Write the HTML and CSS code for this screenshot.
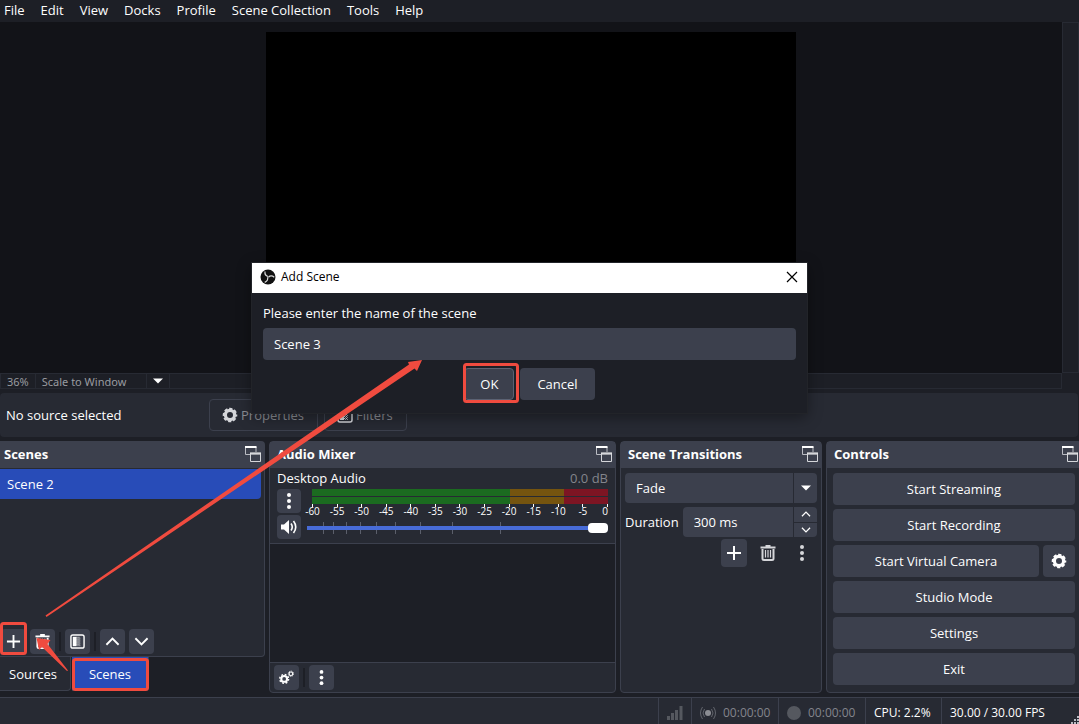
FILE: index.html
```
<!DOCTYPE html>
<html lang="en">
<head>
    <meta charset="UTF-8">
    <meta name="viewport" content="width=device-width, initial-scale=1.0">
    <title>OBS - Add Scene</title>
    <link rel="stylesheet" href="styles.css">
</head>
<body>
    <!-- Shared icons -->
    <svg class="sprite" aria-hidden="true">
        <symbol id="popout" viewBox="0 0 16 16">
            <path d="M5 8.5H.5V1H11v5" fill="none" stroke="#b9bbc2"/>
            <path d="M0 0h11.5v2H0zM5 6.5h11v2H5z" fill="#fff"/>
            <path d="M5.5 7.5h10v8h-10z" fill="none" stroke="#d5d6da"/>
        </symbol>
        <symbol id="gear" viewBox="0 0 16 16">
            <circle cx="8" cy="8" r="4.6" fill="none" stroke="currentColor" stroke-width="3.2"/>
            <circle cx="8" cy="8" r="6.4" fill="none" stroke="currentColor" stroke-width="1.8" stroke-dasharray="3.2 1.83" stroke-dashoffset="1.6"/>
        </symbol>
        <symbol id="plus" viewBox="0 0 16 16">
            <path d="M8 1v14M1 8h14" stroke="currentColor" stroke-width="2"/>
        </symbol>
        <symbol id="trash" viewBox="0 0 16 16">
            <path d="M.5 2.5h15M5.5 1h5" stroke="currentColor" stroke-width="2"/>
            <path d="M2.5 4v9.5q0 1.5 1.5 1.5h8q1.5 0 1.5-1.5V4" fill="none" stroke="currentColor" stroke-width="2"/>
            <path d="M5.5 5v7.5M8 5v7.5M10.5 5v7.5" stroke="currentColor" stroke-width="1.2"/>
        </symbol>
        <symbol id="filter" viewBox="0 0 16 16">
            <rect x="1" y="1" width="14" height="14" rx="2" fill="none" stroke="currentColor" stroke-width="1.5"/>
            <path d="M3 3h4v10H3z" fill="currentColor"/>
            <path d="M7.5 3v10M9.5 3v10" stroke="currentColor" stroke-dasharray="1 1"/>
            <path d="M8.5 4v9M10.5 4v9" stroke="currentColor" stroke-dasharray="1 1" opacity=".7"/>
        </symbol>
        <symbol id="up" viewBox="0 0 16 16">
            <path d="M1.5 11.5L8 5l6.5 6.5" fill="none" stroke="currentColor" stroke-width="2"/>
        </symbol>
        <symbol id="down" viewBox="0 0 16 16">
            <path d="M1.5 4.5L8 11l6.5-6.5" fill="none" stroke="currentColor" stroke-width="2"/>
        </symbol>
        <symbol id="dots" viewBox="0 0 16 16">
            <circle cx="8" cy="2" r="2" fill="currentColor"/>
            <circle cx="8" cy="8" r="2" fill="currentColor"/>
            <circle cx="8" cy="14" r="2" fill="currentColor"/>
        </symbol>
        <symbol id="speaker" viewBox="0 0 16 16">
            <path d="M0 5.5h3L8 1v14l-5-4.500H0z" fill="currentColor"/>
            <path d="M10 4.5q2.500 3.500 0 7M12.500 2q4.500 6 0 12" fill="none" stroke="currentColor" stroke-width="1.600"/>
        </symbol>
        <symbol id="gears" viewBox="0 0 16 16">
            <circle cx="5.5" cy="9.5" r="3.1" fill="none" stroke="currentColor" stroke-width="2.2"/>
            <circle cx="5.5" cy="9.5" r="4.7" fill="none" stroke="currentColor" stroke-width="1.6" stroke-dasharray="1.900 1.790"/>
            <circle cx="12.7" cy="4" r="1.9" fill="none" stroke="currentColor" stroke-width="1.2"/>
            <circle cx="12.7" cy="4" r="2.8" fill="none" stroke="currentColor" stroke-dasharray="1.200 1"/>
        </symbol>
        <symbol id="caret" viewBox="0 0 10 6">
            <path d="M0 .5h10L5 5.5z" fill="#fff"/>
        </symbol>
    </svg>

    <nav class="menu">
        <a href="#">File</a>
        <a href="#">Edit</a>
        <a href="#">View</a>
        <a href="#">Docks</a>
        <a href="#">Profile</a>
        <a href="#">Scene Collection</a>
        <a href="#">Tools</a>
        <a href="#">Help</a>
    </nav>

    <main class="preview">
        <div class="stage"><div class="canvas"></div></div>
        <div class="scroll-right"></div>
    </main>
    <div class="zoom-bar">
        <span class="zoom-level">36%</span>
        <span class="zoom-mode">Scale to Window</span>
        <button class="zoom-arrow" aria-label="Scale mode"><svg width="10" height="6"><use href="#caret"/></svg></button>
    </div>

    <div class="source-bar">
        <span class="source-name">No source selected</span>
        <button class="outline-button"><svg class="icon"><use href="#gear"/></svg>Properties</button>
        <button class="outline-button"><svg class="icon"><use href="#filter"/></svg>Filters</button>
    </div>

    <div class="docks">
        <div class="dock-column">
            <section class="dock scenes">
                <h2>Scenes <svg class="icon"><use href="#popout"/></svg></h2>
                <ul class="scene-list">
                    <li>Scene 2</li>
                </ul>
                <div class="toolbar">
                    <button class="tool" aria-label="Add scene"><svg class="icon"><use href="#plus"/></svg></button>
                    <button class="tool" aria-label="Remove scene"><svg class="icon"><use href="#trash"/></svg></button>
                    <i class="divider"></i>
                    <button class="tool" aria-label="Scene filters"><svg class="icon"><use href="#filter"/></svg></button>
                    <i class="divider"></i>
                    <button class="tool" aria-label="Move up"><svg class="icon"><use href="#up"/></svg></button>
                    <button class="tool" aria-label="Move down"><svg class="icon"><use href="#down"/></svg></button>
                </div>
            </section>
            <div class="tabs">
                <button class="tab">Sources</button>
                <button class="tab active">Scenes</button>
            </div>
        </div>

        <section class="dock mixer">
            <h2>Audio Mixer <svg class="icon"><use href="#popout"/></svg></h2>
            <div class="channel">
                <div class="channel-name">
                    <label for="volume">Desktop Audio</label>
                    <span>0.0 dB</span>
                </div>
                <div class="channel-body">
                    <div class="channel-buttons">
                        <button class="tool" aria-label="Audio options"><svg class="icon"><use href="#dots"/></svg></button>
                        <button class="tool" aria-label="Mute"><svg class="icon"><use href="#speaker"/></svg></button>
                    </div>
                    <div class="channel-levels">
                        <div class="meter"></div>
                        <div class="meter"></div>
                        <div class="scale">
                            <span>-60</span><span>-55</span><span>-50</span><span>-45</span><span>-40</span><span>-35</span><span>-30</span><span>-25</span><span>-20</span><span>-15</span><span>-10</span><span>-5</span><span>0</span>
                        </div>
                        <div class="slider">
                            <svg viewBox="0 0 301 12" preserveAspectRatio="none">
                                <path d="M16.5 0v12M26.5 0v12M39.5 0v12M53.5 0v12M69.5 0v12M88.5 0v12M113.5 0v12M145.5 0v12M193.5 0v12" stroke="#5b5f6b"/>
                            </svg>
                            <input type="range" id="volume" min="0" max="100" value="100">
                        </div>
                    </div>
                </div>
            </div>
            <div class="mixer-space"></div>
            <div class="toolbar mixer-toolbar">
                <button class="tool" aria-label="Advanced audio"><svg class="icon"><use href="#gears"/></svg></button>
                <i class="divider"></i>
                <button class="tool" aria-label="Mixer menu"><svg class="icon"><use href="#dots"/></svg></button>
            </div>
        </section>

        <section class="dock transitions">
            <h2>Scene Transitions <svg class="icon"><use href="#popout"/></svg></h2>
            <div class="transition-form">
                <div class="field">
                    <select aria-label="Transition">
                        <option>Fade</option>
                    </select>
                    <span class="field-arrow"><svg width="10" height="6"><use href="#caret"/></svg></span>
                </div>
                <div class="duration">
                    <label for="duration">Duration</label>
                    <div class="field">
                        <input type="text" id="duration" value="300 ms">
                        <div class="steps">
                            <button aria-label="Increase"><svg width="10" height="10"><use href="#up"/></svg></button>
                            <button aria-label="Decrease"><svg width="10" height="10"><use href="#down"/></svg></button>
                        </div>
                    </div>
                </div>
                <div class="transition-tools">
                    <button class="tool" aria-label="Add transition"><svg class="icon"><use href="#plus"/></svg></button>
                    <button class="tool flat" aria-label="Remove transition"><svg class="icon"><use href="#trash"/></svg></button>
                    <button class="tool flat" aria-label="Transition menu"><svg class="icon"><use href="#dots"/></svg></button>
                </div>
            </div>
        </section>

        <section class="dock controls">
            <h2>Controls <svg class="icon"><use href="#popout"/></svg></h2>
            <div class="control-list">
                <button class="button">Start Streaming</button>
                <button class="button">Start Recording</button>
                <div class="control-row">
                    <button class="button">Start Virtual Camera</button>
                    <button class="button square" aria-label="Virtual camera settings"><svg class="icon"><use href="#gear"/></svg></button>
                </div>
                <button class="button">Studio Mode</button>
                <button class="button">Settings</button>
                <button class="button">Exit</button>
            </div>
        </section>
    </div>

    <footer class="status">
        <div class="status-item signal">
            <svg width="16" height="14" viewBox="0 0 16 14"><path d="M1.5 10v4M5.5 7v7M9.5 4v10M14 0v14" stroke="#55585f" stroke-width="3"/></svg>
        </div>
        <div class="status-item timer">
            <svg width="16" height="14" viewBox="0 0 16 14" fill="none" stroke="#62656d">
                <circle cx="8" cy="7" r="3" fill="#8b8d93" stroke="none"/>
                <path d="M4.5 3q-3 4 0 8M11.5 3q3 4 0 8M2.5 1q-4 6 0 12M13.5 1q4 6 0 12"/>
            </svg>
            00:00:00
        </div>
        <div class="status-item timer">
            <svg width="14" height="14"><circle cx="7" cy="7" r="7" fill="#55585f"/></svg>
            00:00:00
        </div>
        <div class="status-item cpu">CPU: 2.2%</div>
        <div class="status-item fps">30.00 / 30.00 FPS</div>
        <svg class="grip" width="8" height="8" viewBox="0 0 8 8"><path d="M6 0h2v2H6zM3 3h2v2H3zM6 3h2v2H6zM0 6h2v2H0zM3 6h2v2H3zM6 6h2v2H6z" fill="#b9bbc2"/></svg>
    </footer>

    <div class="dialog" role="dialog" aria-labelledby="dialog-title">
        <div class="dialog-title">
            <svg width="16" height="16" viewBox="0 0 16 16">
                <circle cx="8" cy="8" r="7.5" fill="#111"/>
                <g fill="none" stroke="#ddd" stroke-width="1.2">
                    <path id="blade" d="M8 7.5Q4.500 6.500 5 2.500"/>
                    <use href="#blade" transform="rotate(120 8 8)"/>
                    <use href="#blade" transform="rotate(240 8 8)"/>
                </g>
            </svg>
            <span id="dialog-title">Add Scene</span>
            <button class="close" aria-label="Close"><svg width="12" height="12" viewBox="0 0 12 12"><path d="M1 1l10 10M11 1L1 11" stroke="#000" stroke-width="1.2"/></svg></button>
        </div>
        <form class="dialog-body">
            <label for="scene-name">Please enter the name of the scene</label>
            <input type="text" id="scene-name" value="Scene 3">
            <div class="dialog-buttons">
                <button type="button" class="button ok">OK</button>
                <button type="button" class="button">Cancel</button>
            </div>
        </form>
    </div>

    <!-- Red arrows and boxes over the window -->
    <svg class="marks" width="540" height="700" viewBox="0 0 540 700">
        <g fill="none" stroke="#f04b3f" stroke-width="3">
            <rect x="464.5" y="364.5" width="53" height="37" rx="2"/>
            <rect x="1.5" y="623.5" width="24" height="30" rx="2"/>
            <rect x="73.5" y="659.5" width="74" height="30" rx="2"/>
        </g>
        <g fill="#f04b3f">
            <path d="M45.5 615.5L409 364.5l-1-2.500 14-2-5 11-2.500-2.500L46.500 617z"/>
            <path d="M36.5 638l14 2-3 4 20.500 26.500-1 .5L42 647l-3 3z"/>
        </g>
    </svg>
</body>
</html>
```
FILE: styles.css
```
* {
    margin: 0;
    padding: 0;
    box-sizing: border-box;
}

body {
    font-family: 'Open Sans', 'Noto Sans', sans-serif;
    font-size: 13px;
    line-height: 18px;
    background-color: #1d1f26;
    color: #fefefe;
    min-height: 100vh;
    display: flex;
    flex-direction: column;
    overflow: hidden;
    position: relative;
}

button, input, select {
    font: inherit;
    color: inherit;
    border: none;
    background: none;
    outline: none;
}

button {
    display: flex;
    align-items: center;
    justify-content: center;
}

svg {
    display: block;
    flex-shrink: 0;
}

.sprite {
    position: absolute;
    width: 0;
    height: 0;
}

.icon {
    width: 16px;
    height: 16px;
}

/* Menu */
.menu {
    display: flex;
    gap: 16px;
    height: 22px;
    padding: 1px 4px;
}

.menu a {
    color: inherit;
    text-decoration: none;
}

/* Preview */
.preview {
    flex: 1;
    display: flex;
}

.stage {
    flex: 1;
    display: flex;
    justify-content: center;
    padding: 10px 0;
    background-color: #121318;
}

.canvas {
    aspect-ratio: 16 / 10;
    background-color: #000;
}

.scroll-right {
    width: 17px;
    border: 1px solid #272a33;
}

.zoom-bar {
    display: flex;
    height: 16px;
    margin-right: 17px;
    border: 1px solid #272a33;
    font-family: 'Noto Sans', sans-serif;
    font-size: 11px;
    line-height: 15px;
    color: #999ba0;
}

.zoom-bar > * {
    border-right: 1px solid #272a33;
    padding: 0 6px;
}

.zoom-mode {
    width: 111px;
}

/* Source toolbar */
.source-bar {
    display: flex;
    align-items: center;
    gap: 6px;
    height: 44px;
    margin: 4px 1px 4px 0;
    padding: 0 6px;
    border-radius: 4px;
    background-color: #272a33;
}

.source-name {
    width: 197px;
}

.outline-button {
    height: 32px;
    padding: 0 13px 0 12px;
    gap: 3px;
    border: 1px solid #3c404d;
    border-radius: 4px;
    color: #8b8d93;
}

.outline-button .icon {
    color: #d5d6da;
}

/* Docks */
.docks {
    display: grid;
    grid-template-columns: 265fr 347fr 202fr 256fr;
    gap: 4px;
    height: 252px;
    margin-right: -3px;
}

.dock-column {
    display: flex;
    flex-direction: column;
}

.dock {
    display: flex;
    flex-direction: column;
    min-width: 0;
    border: 1px solid #3c404d;
    border-radius: 4px;
    background-color: #272a33;
}

.dock h2 {
    display: flex;
    align-items: center;
    justify-content: space-between;
    height: 26px;
    padding: 0 3px 2px 7px;
    background-color: #3c404d;
    font-size: 13px;
    font-weight: bold;
}

.scenes {
    flex: 1;
    border-left: none;
    border-radius: 0 4px 4px 0;
}

.scenes h2 {
    padding-left: 4px;
}

.scene-list {
    flex: 1;
    list-style: none;
    padding: 1px 3px 0 0;
}

.scene-list li {
    height: 30px;
    padding: 6px 7px;
    border-radius: 0 4px 4px 0;
    background-color: #284cb8;
}

.toolbar {
    display: flex;
    align-items: center;
    gap: 4px;
    padding: 2px 1px;
}

.tool {
    width: 25px;
    height: 25px;
    border-radius: 4px;
    background-color: #3c404d;
}

.toolbar .icon {
    width: 15px;
    height: 15px;
}

.flat {
    background: none;
    color: #d5d6da;
}

.divider {
    width: 2px;
    height: 19px;
    background-color: #1d1f26;
}

.tabs {
    display: flex;
    gap: 1px;
    height: 34px;
    margin-bottom: 2px;
}

.tab {
    width: 71px;
    padding-right: 4px;
    border: 1px solid #3c404d;
    border-width: 0 1px 1px 0;
    border-radius: 0 0 4px 0;
    background-color: #272a33;
}

.tab.active {
    width: 77px;
    padding: 0;
    background-color: #284cb8;
}

/* Audio mixer */
.channel {
    padding: 1px 7px 4px;
    border-bottom: 1px solid #3c404d;
}

.channel-name {
    display: flex;
    justify-content: space-between;
}

.channel-name span {
    color: #83858c;
}

.channel-body {
    display: flex;
    gap: 6px;
    padding-top: 2px;
}

.channel-buttons {
    display: flex;
    flex-direction: column;
    gap: 2px;
}

.channel-buttons .tool {
    width: 24px;
    height: 24px;
}

.channel-levels {
    flex: 1;
}

.meter {
    height: 7px;
    margin: 0 0 1px 5px;
    background: linear-gradient(to right, #1b6b20 67%, #75540f 67%, #75540f 85%, #7d1523 85%);
}

.scale {
    display: flex;
    justify-content: space-between;
    height: 18px;
    margin: -1px 0 0 5px;
    font-size: 10px;
    line-height: 8px;
}

.scale span {
    width: 1px;
    display: flex;
    flex-direction: column;
    align-items: center;
}

.scale span:last-child {
    align-items: flex-end;
}

.scale span::before {
    content: "";
    width: 1px;
    height: 3px;
    background-color: #fefefe;
}

.slider {
    position: relative;
    height: 14px;
}

.slider svg {
    position: absolute;
    width: 100%;
    height: 12px;
}

.slider input {
    position: absolute;
    width: 100%;
    height: 12px;
    appearance: none;
    background: linear-gradient(#476bd7, #476bd7) center / 100% 4px no-repeat;
}

.slider input::-webkit-slider-thumb {
    appearance: none;
    width: 20px;
    height: 10px;
    border-radius: 4px;
    background-color: #fff;
}

.mixer-space {
    flex: 1;
    background-color: #1d1f26;
}

.mixer-toolbar {
    padding: 2px 4px;
    border-top: 1px solid #3c404d;
}

/* Transitions */
.transition-form {
    display: flex;
    flex-direction: column;
    gap: 4px;
    padding: 5px 4px;
}

.field {
    flex: 1;
    display: flex;
    position: relative;
    min-width: 0;
    height: 30px;
    border-radius: 4px;
    background-color: #3c404d;
}

.field select,
.field input {
    flex: 1;
    min-width: 0;
    height: 30px;
    padding: 0 11px;
    appearance: none;
}

.field-arrow {
    position: absolute;
    right: 0;
    width: 24px;
    height: 30px;
    display: flex;
    align-items: center;
    justify-content: center;
    border-left: 1px solid #272a33;
    pointer-events: none;
}

.transition-form > .field {
    flex: none;
}

.duration {
    display: flex;
    align-items: center;
    gap: 4px;
}

.steps {
    width: 24px;
    display: flex;
    flex-direction: column;
    border-left: 1px solid #272a33;
}

.steps button {
    flex: 1;
}

.steps button + button {
    border-top: 1px solid #272a33;
}

.transition-tools {
    display: flex;
    justify-content: flex-end;
    gap: 8px;
    margin-top: -2px;
    padding-right: 2px;
}

.transition-tools .tool {
    width: 26px;
    height: 28px;
}

/* Controls */
.control-list {
    display: flex;
    flex-direction: column;
    gap: 4px;
    padding: 5px 6px;
}

.button {
    height: 32px;
    padding: 0 17px;
    border-radius: 4px;
    background-color: #3c404d;
}

.control-row {
    display: flex;
    gap: 4px;
}

.control-row .button {
    flex: 1;
}

.control-row .square {
    flex: none;
    width: 32px;
    padding: 0;
}

/* Status bar */
.status {
    display: flex;
    justify-content: flex-end;
    position: relative;
    height: 27px;
    margin-top: 4px;
    border-top: 1px solid #3c404d;
    background-color: #272a33;
    font-size: 12px;
}

.status-item {
    display: flex;
    align-items: center;
    gap: 7px;
    padding: 4px 8px 0;
    border-left: 1px solid #3c404d;
}

.timer {
    width: 87px;
    color: #83858c;
    white-space: nowrap;
}

.cpu {
    width: 76px;
    white-space: nowrap;
}

.fps {
    width: 138px;
}

.grip {
    position: absolute;
    right: 0;
    bottom: 0;
}

/* Dialog */
.dialog {
    position: absolute;
    top: 263px;
    left: 252px;
    width: 555px;
    background-color: #1d1f26;
    box-shadow: 0 0 0 1px #222429, 0 4px 14px rgba(0, 0, 0, 0.4);
}

.dialog-title {
    display: flex;
    align-items: center;
    gap: 5px;
    height: 30px;
    padding: 0 9px 2px 8px;
    background-color: #fff;
    color: #000;
    font-size: 12px;
}

.close {
    margin-left: auto;
}

.dialog-body {
    display: flex;
    flex-direction: column;
    padding: 11px 11px 13px;
}

.dialog-body input {
    height: 32px;
    margin: 6px 0 8px;
    padding: 0 11px;
    border-radius: 4px;
    background-color: #3c404d;
}

.dialog-buttons {
    display: flex;
    justify-content: center;
    gap: 6px;
}

.ok {
    border: 1px solid #5b6273;
    width: 50px;
}

.marks {
    position: absolute;
    top: 0;
    left: 0;
    pointer-events: none;
}
```
